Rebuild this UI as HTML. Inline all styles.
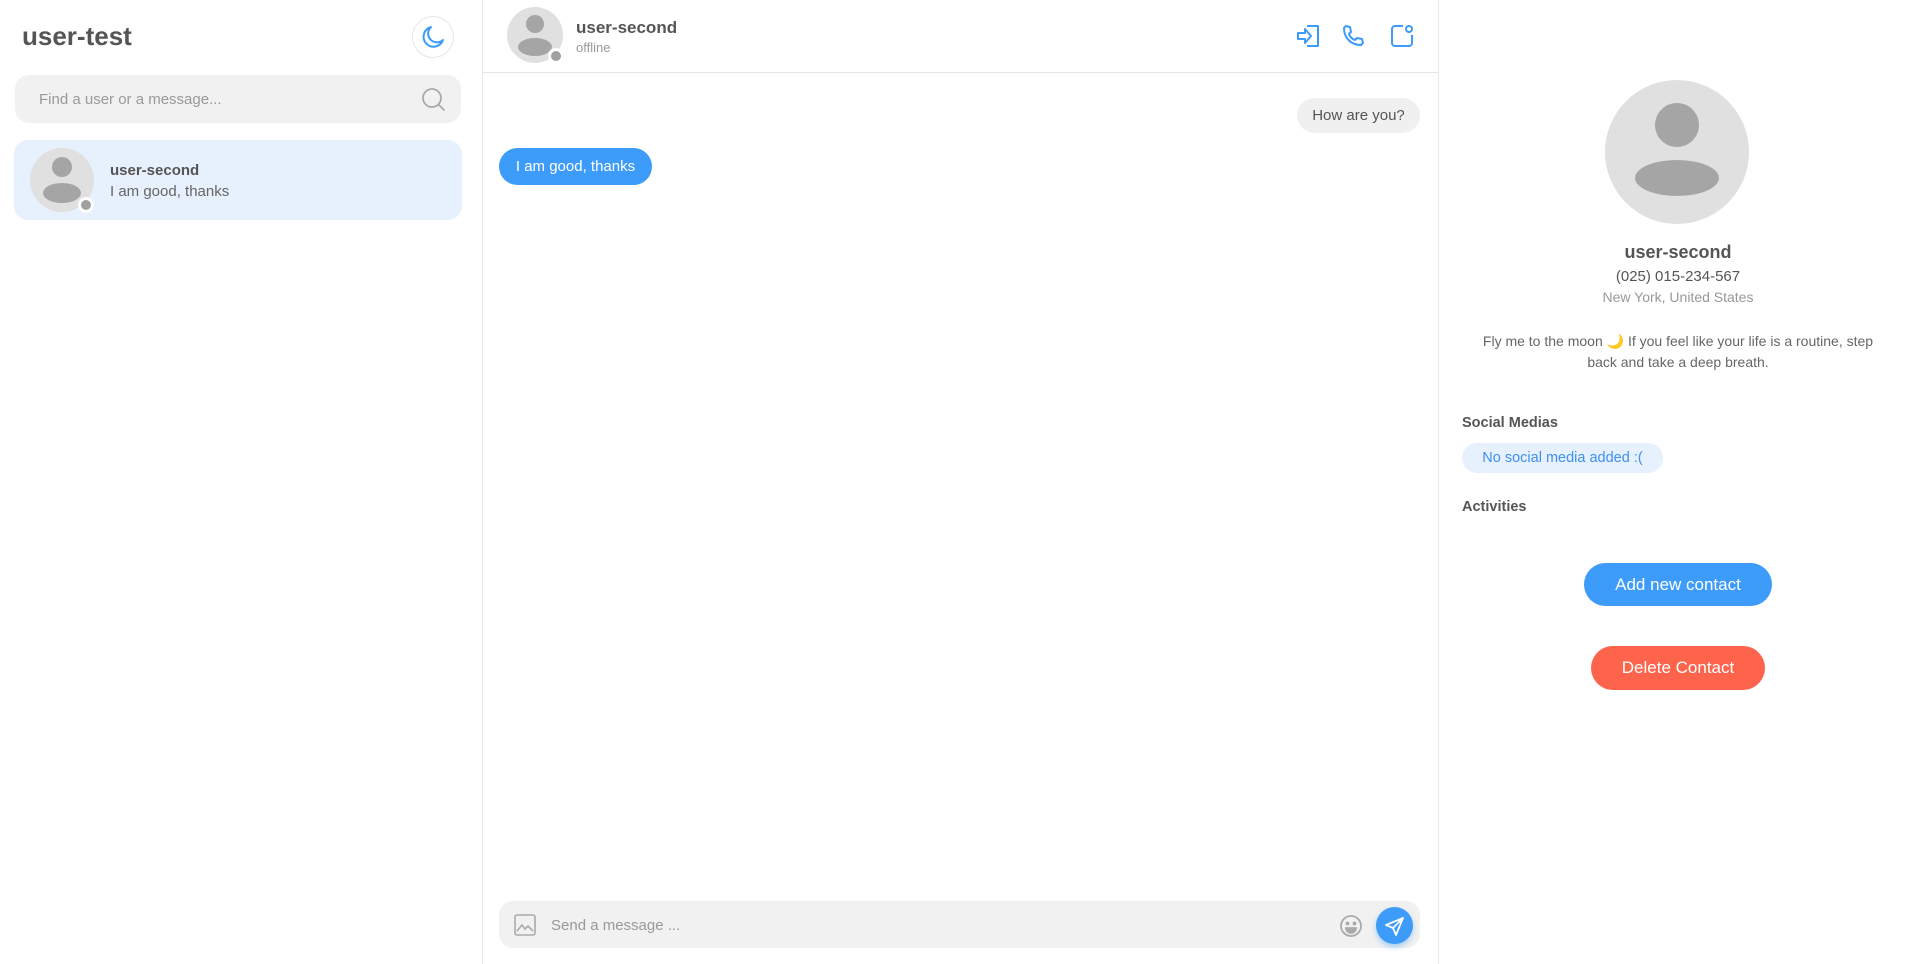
<!DOCTYPE html>
<html><head><meta charset="utf-8"><style>
*{box-sizing:border-box;margin:0;padding:0}
body{width:1918px;height:964px;overflow:hidden;background:#fff;font-family:"Liberation Sans",Arial,sans-serif;color:#555;position:relative}
.abs{position:absolute}
.av{position:absolute;border-radius:50%;background:#e0e0e0;overflow:hidden}
.av .h{position:absolute;border-radius:50%;background:#a5a5a5}
</style></head><body>
<!-- left -->
<div class="abs" style="left:0;top:0;width:483px;height:964px;border-right:1px solid #e8e8e8"></div>
<div class="abs" style="left:22px;top:21px;font-size:26px;font-weight:bold;color:#555">user-test</div>
<div class="abs" style="left:412px;top:16px;width:42px;height:42px;border-radius:50%;border:1px solid #e6e6e6">
<svg width="42" height="42" viewBox="0 0 42 42" style="position:absolute;left:-1px;top:-1px"><path d="M19 11a10 10 0 1 0 12 13a8 8 0 0 1-12-13z" fill="none" stroke="#3d9bf9" stroke-width="2" stroke-linejoin="round"/></svg></div>
<div class="abs" style="left:15px;top:75px;width:446px;height:48px;border-radius:14px;background:#f1f1f1"></div>
<div class="abs" style="left:39px;top:91px;font-size:15px;color:#999">Find a user or a message...</div>
<svg class="abs" style="left:421px;top:87px" width="26" height="26" viewBox="0 0 26 26"><circle cx="11" cy="11" r="9" fill="none" stroke="#aaa" stroke-width="1.8"/><path d="M18 18l5 5" stroke="#aaa" stroke-width="1.8" stroke-linecap="round"/></svg>
<div class="abs" style="left:14px;top:140px;width:448px;height:80px;border-radius:14px;background:#e7f1fd"></div>
<div class="av" style="left:30px;top:148px;width:64px;height:64px"><div class="h" style="left:22px;top:9px;width:20px;height:20px"></div><div class="h" style="left:13px;top:35px;width:38px;height:20px"></div></div>
<div class="abs" style="left:78px;top:197px;width:16px;height:16px;border-radius:50%;background:#fff"><div style="margin:3px;width:10px;height:10px;border-radius:50%;background:#a0a0a0"></div></div>
<div class="abs" style="left:110px;top:162px;font-size:15px;font-weight:bold;color:#555">user-second</div>
<div class="abs" style="left:110px;top:183px;font-size:15px;color:#666">I am good, thanks</div>
<!-- middle -->
<div class="abs" style="left:483px;top:72px;width:955px;height:1px;background:#e5e5e5"></div>
<div class="abs" style="left:1438px;top:0;width:1px;height:964px;background:#e8e8e8"></div>
<div class="av" style="left:507px;top:7px;width:56px;height:56px"><div class="h" style="left:19px;top:8px;width:18px;height:18px"></div><div class="h" style="left:11px;top:31px;width:34px;height:18px"></div></div>
<div class="abs" style="left:548px;top:48px;width:15px;height:15px;border-radius:50%;background:#fff"><div style="margin:2.5px;width:10px;height:10px;border-radius:50%;background:#a0a0a0"></div></div>
<div class="abs" style="left:576px;top:18px;font-size:17px;font-weight:bold;color:#555">user-second</div>
<div class="abs" style="left:576px;top:40px;font-size:13px;color:#999">offline</div>
<svg class="abs" style="left:1295px;top:24px" width="26" height="24" viewBox="0 0 26 24" fill="none" stroke="#3d9bf9" stroke-width="2" stroke-linejoin="round"><path d="M12 2h11v20H12"/><path d="M3 9h7V5l6 7-6 7v-4H3z"/></svg>
<svg class="abs" style="left:1341px;top:24px" width="24" height="24" viewBox="0 0 24 24" fill="none" stroke="#3d9bf9" stroke-width="2" stroke-linejoin="round"><path d="M5 2l4 1 1 5-2 2c1 3 3 5 6 6l2-2 5 1 1 4-2 2C10 21 3 14 3 4z"/></svg>
<svg class="abs" style="left:1389px;top:23px" width="26" height="26" viewBox="0 0 26 26" fill="none" stroke="#3d9bf9" stroke-width="2"><path d="M14 3H6a3 3 0 0 0-3 3v14a3 3 0 0 0 3 3h14a3 3 0 0 0 3-3v-8"/><circle cx="20" cy="6" r="3"/></svg>
<div class="abs" style="left:1297px;top:98px;width:123px;height:35px;border-radius:18px;background:#f0f0f0;font-size:15px;color:#555;text-align:center;line-height:35px">How are you?</div>
<div class="abs" style="left:499px;top:148px;width:153px;height:37px;border-radius:19px;background:#3d9bf9;font-size:15px;color:#fff;text-align:center;line-height:37px">I am good, thanks</div>
<div class="abs" style="left:499px;top:901px;width:921px;height:47px;border-radius:14px;background:#f1f1f1"></div>
<svg class="abs" style="left:514px;top:914px" width="22" height="22" viewBox="0 0 22 22" fill="none" stroke="#aaa" stroke-width="1.6"><rect x="1" y="1" width="20" height="20" rx="2"/><path d="M3 17l5-6 3 4 3-3 5 5"/></svg>
<div class="abs" style="left:551px;top:917px;font-size:15px;color:#999">Send a message ...</div>
<svg class="abs" style="left:1339px;top:914px" width="24" height="24" viewBox="0 0 24 24" fill="none" stroke="#aaa" stroke-width="1.8"><circle cx="12" cy="12" r="10"/><circle cx="8.5" cy="9.5" r="1" fill="#aaa"/><circle cx="15.5" cy="9.5" r="1" fill="#aaa"/><path d="M7 14h10a5 5 0 0 1-10 0z" fill="#aaa"/></svg>
<div class="abs" style="left:1376px;top:907px;width:37px;height:37px;border-radius:50%;background:#3d9bf9;box-shadow:0 3px 6px rgba(61,155,249,.4)"></div>
<svg class="abs" style="left:1383px;top:914px" width="24" height="24" viewBox="0 0 24 24" fill="none" stroke="#fff" stroke-width="1.8" stroke-linejoin="round"><path d="M20 4L3 11l7 3 3 7z"/><path d="M10 14l10-10"/></svg>
<!-- right -->
<div class="av" style="left:1605px;top:80px;width:144px;height:144px"><div class="h" style="left:50px;top:23px;width:44px;height:44px"></div><div class="h" style="left:30px;top:80px;width:84px;height:36px"></div></div>
<div class="abs" style="left:1438px;top:242px;width:480px;text-align:center;font-size:18px;font-weight:bold;color:#555">user-second</div>
<div class="abs" style="left:1438px;top:268px;width:480px;text-align:center;font-size:15px;color:#555">(025) 015-234-567</div>
<div class="abs" style="left:1438px;top:289px;width:480px;text-align:center;font-size:14px;color:#999">New York, United States</div>
<div class="abs" style="left:1438px;top:331px;width:480px;text-align:center;font-size:14px;line-height:21px;color:#666;white-space:nowrap">Fly me to the moon 🌙 If you feel like your life is a routine, step<br>back and take a deep breath.</div>
<div class="abs" style="left:1462px;top:415px;font-size:14.5px;font-weight:bold;color:#555">Social Medias</div>
<div class="abs" style="left:1462px;top:443px;width:201px;height:30px;border-radius:15px;background:#e7f1fd;color:#3d8ff0;font-size:14.5px;line-height:30px;text-align:center">No social media added :(</div>
<div class="abs" style="left:1462px;top:499px;font-size:14.5px;font-weight:bold;color:#555">Activities</div>
<div class="abs" style="left:1584px;top:563px;width:188px;height:43px;border-radius:22px;background:#3d9bf9;color:#fff;font-size:17px;text-align:center;line-height:43px">Add new contact</div>
<div class="abs" style="left:1591px;top:646px;width:174px;height:44px;border-radius:22px;background:#fe644b;color:#fff;font-size:17px;text-align:center;line-height:44px">Delete Contact</div>
</body></html>
